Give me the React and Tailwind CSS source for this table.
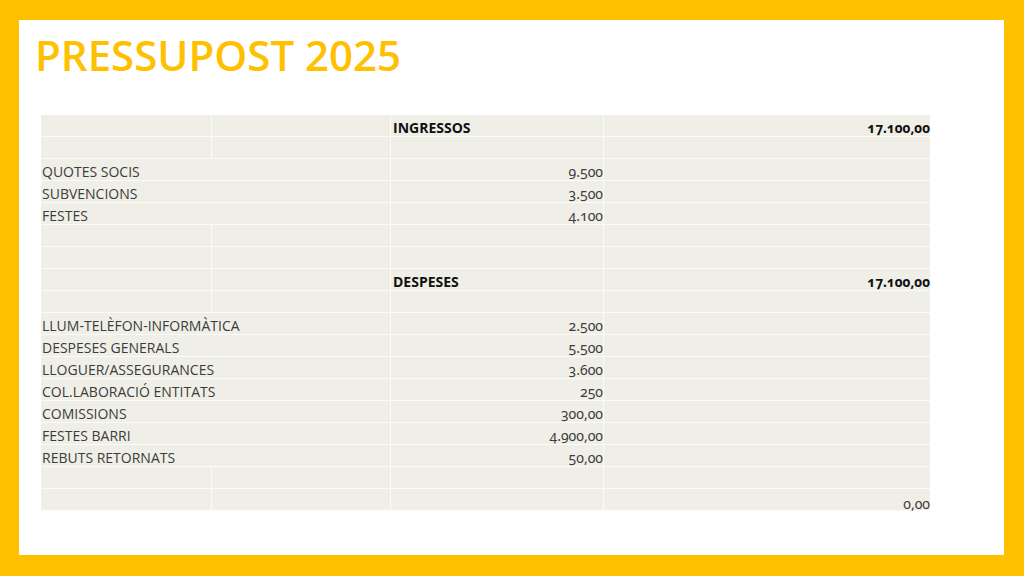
import React from 'react';

const rows = [
  { head: 'INGRESSOS', total: '17.100,00' },
  {},
  { label: 'QUOTES SOCIS', amount: '9.500' },
  { label: 'SUBVENCIONS', amount: '3.500' },
  { label: 'FESTES', amount: '4.100' },
  {},
  {},
  { head: 'DESPESES', total: '17.100,00' },
  {},
  { label: 'LLUM-TELÈFON-INFORMÀTICA', amount: '2.500' },
  { label: 'DESPESES GENERALS', amount: '5.500' },
  { label: 'LLOGUER/ASSEGURANCES', amount: '3.600' },
  { label: 'COL.LABORACIÓ ENTITATS', amount: '250' },
  { label: 'COMISSIONS', amount: '300,00' },
  { label: 'FESTES BARRI', amount: '4.900,00' },
  { label: 'REBUTS RETORNATS', amount: '50,00' },
  {},
  { balance: '0,00' },
];

const BudgetRow = ({ row }) => {
  const merged = !!row.label;
  return (
    <div className="grid grid-cols-[171px_179px_213px_326px] h-[22px] border-b border-[#fbfbf8] pt-[3px] text-[14px] leading-[20px] text-[#3c3c3c]">
      {merged ? (
        <div className="col-span-2 border-r border-[#fbfbf8] -mt-[3px] pt-[3px] pl-[1px] whitespace-nowrap">{row.label}</div>
      ) : (
        <>
          <div className="border-r border-[#fbfbf8] -mt-[3px]" />
          <div className="border-r border-[#fbfbf8] -mt-[3px]" />
        </>
      )}
      <div className="border-r border-[#fbfbf8] -mt-[3px] pt-[3px] text-right whitespace-nowrap [font-family:'Noto_Sans',sans-serif] oldstyle-nums">
        {row.head ? (
          <span className="float-left pl-[2px] font-bold text-[#111] [font-family:'Open_Sans',sans-serif]">{row.head}</span>
        ) : (
          row.amount
        )}
      </div>
      <div className="text-right whitespace-nowrap [font-family:'Noto_Sans',sans-serif] oldstyle-nums">
        {row.total && <span className="text-[13.5px] font-bold text-[#111]">{row.total}</span>}
        {row.balance && <span className="relative top-[2px]">{row.balance}</span>}
      </div>
    </div>
  );
};

export default function App() {
  return (
    <div className="w-[1024px] h-[576px] bg-[#FFC000] pt-[20px] pl-[19px] pr-[20px] pb-[21px] [font-family:'Open_Sans',sans-serif]">
      <div className="h-full bg-white flex flex-col">
        <h1 className="pl-[16px] pt-[12px] text-[42px] leading-[46px] font-semibold text-[#FFC000]">
          PRESSUPOST 2025
        </h1>
        <div className="ml-[22px] mt-[37px] w-[889px] bg-[#efefe7]">
          {rows.map((row, i) => (
            <BudgetRow key={i} row={row} />
          ))}
        </div>
      </div>
    </div>
  );
}
